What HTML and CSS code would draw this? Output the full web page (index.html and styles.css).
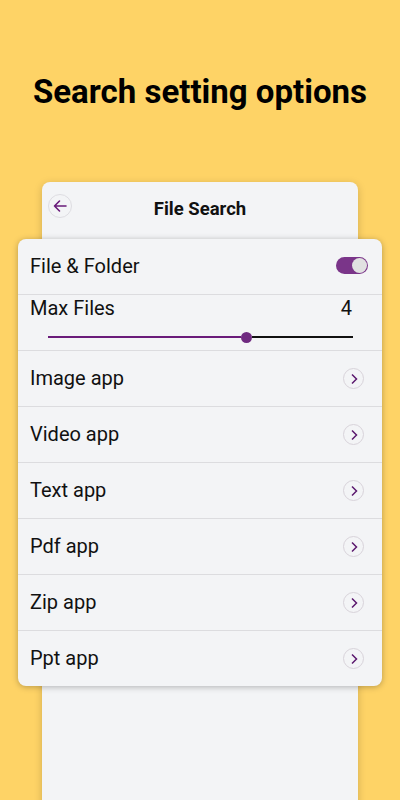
FILE: index.html
```html
<!DOCTYPE html>
<html lang="en">
<head>
<meta charset="utf-8">
<title>Search setting options</title>
<link rel="stylesheet" href="styles.css">
</head>
<body>
  <h1 class="headline">Search setting options</h1>
  <div class="panel">
    <div class="panel-header">
      <button class="back-btn" aria-label="Back">
        <svg width="16" height="16" viewBox="0 0 16 16"><path d="M14 8H2.5M7.5 3L2.5 8l5 5" fill="none" stroke="#6a1b7a" stroke-width="1.6" stroke-linecap="round" stroke-linejoin="round"/></svg>
      </button>
      <div class="panel-title">File Search</div>
      <span></span>
    </div>
    <div class="card">
      <div class="row row-first">
        <span class="label">File &amp; Folder</span>
        <span class="toggle"><span class="knob"></span></span>
      </div>
      <div class="slider-block">
        <div class="slider-top">
          <span class="label">Max Files</span>
          <span class="value">4</span>
        </div>
        <div class="slider">
          <div class="track-on"></div>
          <div class="thumb"></div>
          <div class="track-off"></div>
        </div>
      </div>
      <div class="row"><span class="label">Image app</span><span class="chev"><svg width="8" height="12" viewBox="0 0 8 12"><path d="M2 1.5L6.5 6 2 10.5" fill="none" stroke="#5c1a6e" stroke-width="1.5"/></svg></span></div>
      <div class="row"><span class="label">Video app</span><span class="chev"><svg width="8" height="12" viewBox="0 0 8 12"><path d="M2 1.5L6.5 6 2 10.5" fill="none" stroke="#5c1a6e" stroke-width="1.5"/></svg></span></div>
      <div class="row"><span class="label">Text app</span><span class="chev"><svg width="8" height="12" viewBox="0 0 8 12"><path d="M2 1.5L6.5 6 2 10.5" fill="none" stroke="#5c1a6e" stroke-width="1.5"/></svg></span></div>
      <div class="row"><span class="label">Pdf app</span><span class="chev"><svg width="8" height="12" viewBox="0 0 8 12"><path d="M2 1.5L6.5 6 2 10.5" fill="none" stroke="#5c1a6e" stroke-width="1.5"/></svg></span></div>
      <div class="row"><span class="label">Zip app</span><span class="chev"><svg width="8" height="12" viewBox="0 0 8 12"><path d="M2 1.5L6.5 6 2 10.5" fill="none" stroke="#5c1a6e" stroke-width="1.5"/></svg></span></div>
      <div class="row row-last"><span class="label">Ppt app</span><span class="chev"><svg width="8" height="12" viewBox="0 0 8 12"><path d="M2 1.5L6.5 6 2 10.5" fill="none" stroke="#5c1a6e" stroke-width="1.5"/></svg></span></div>
    </div>
  </div>
</body>
</html>
```
FILE: styles.css
```css
* { box-sizing: border-box; }
html, body { margin: 0; padding: 0; }
body {
  width: 400px;
  height: 800px;
  overflow: hidden;
  background: #fed366;
  font-family: Roboto, "Noto Sans", sans-serif;
  color: #111;
}
.headline {
  margin: 76px 0 0;
  font-size: 33px;
  line-height: 32px;
  font-weight: 700;
  text-align: center;
  color: #000;
}
.panel {
  margin: 74px 42px 0;
  min-height: 640px;
  background: #f3f4f6;
  border-radius: 8px 8px 0 0;
  box-shadow: 0 2px 8px rgba(0,0,0,0.18);
}
.panel-header {
  height: 57px;
  padding: 12px 6px 0;
  display: grid;
  grid-template-columns: 24px 1fr 24px;
  align-items: start;
}
.back-btn {
  width: 24px;
  height: 24px;
  padding: 0;
  border: 1px solid #dedde2;
  border-radius: 50%;
  background: transparent;
  display: flex;
  align-items: center;
  justify-content: center;
}
.panel-title {
  text-align: center;
  font-size: 18.5px;
  font-weight: 700;
  line-height: 24px;
  padding-top: 3px;
}
.card {
  margin: 0 -24px;
  background: #f3f4f6;
  border-radius: 8px;
  box-shadow: 0 1px 6px rgba(0,0,0,0.28);
}
.row {
  height: 56px;
  padding: 0 18px 2px 12px;
  display: flex;
  align-items: center;
  justify-content: space-between;
  border-bottom: 1px solid #dcdcdf;
}
.row .chev { margin-bottom: -2px; }
.row-first { height: 56px; padding-right: 14px; }
.row-last { height: 55px; border-bottom: none; }
.label {
  font-size: 20px;
  line-height: 24px;
}
.toggle {
  width: 32px;
  height: 17px;
  border-radius: 9px;
  background: #7a3589;
  display: flex;
  align-items: center;
  justify-content: flex-end;
  padding-right: 1px;
}
.knob {
  width: 15px;
  height: 15px;
  border-radius: 50%;
  background: #e1e1e1;
}
.slider-block {
  height: 56px;
  padding: 0 30px 0 12px;
  border-bottom: 1px solid #dcdcdf;
}
.slider-top {
  display: flex;
  justify-content: space-between;
  align-items: center;
  height: 25px;
}
.value { font-size: 20px; line-height: 24px; }
.slider {
  margin: 12px -1px 0 18px;
  display: flex;
  align-items: center;
  height: 10px;
}
.track-on {
  width: 193px;
  height: 2px;
  background: #6a1b7a;
}
.thumb {
  width: 11px;
  height: 11px;
  border-radius: 50%;
  background: #6f2a80;
  flex: none;
}
.track-off {
  flex: 1;
  height: 2px;
  background: #111;
}
.chev {
  width: 21px;
  height: 21px;
  border: 1px solid #d8d3da;
  border-radius: 50%;
  display: flex;
  align-items: center;
  justify-content: center;
  padding-left: 1px;
}
```
